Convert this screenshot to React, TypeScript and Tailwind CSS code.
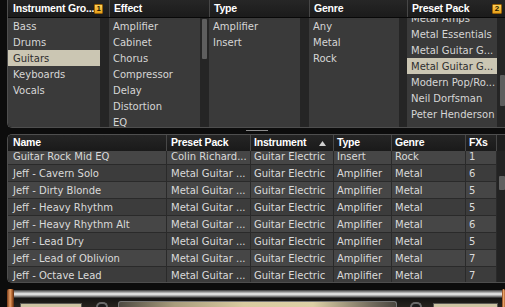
import React from "react";

type TopCol = {
  title: string;
  badge?: string;
  w: string;
  gutter: string;
  items: string[];
  selected?: number;
  offset: string;
  thumb?: string;
  first?: boolean;
};

const topCols: TopCol[] = [
  {
    title: "Instrument Gro...",
    badge: "1",
    w: "w-[101px]",
    gutter: "w-[9px]",
    items: ["Bass", "Drums", "Guitars", "Keyboards", "Vocals"],
    selected: 2,
    offset: "mt-0",
    first: true,
  },
  {
    title: "Effect",
    w: "w-[100px]",
    gutter: "w-[9px]",
    items: ["Amplifier", "Cabinet", "Chorus", "Compressor", "Delay", "Distortion", "EQ"],
    offset: "mt-0",
    thumb: "mt-[1px] ml-[2px] w-[5px] h-[40px]",
  },
  {
    title: "Type",
    w: "w-[100px]",
    gutter: "w-[9px]",
    items: ["Amplifier", "Insert"],
    offset: "mt-0",
  },
  {
    title: "Genre",
    w: "w-[98px]",
    gutter: "w-[8px]",
    items: ["Any", "Metal", "Rock"],
    offset: "mt-0",
  },
  {
    title: "Preset Pack",
    badge: "2",
    w: "w-[98px]",
    gutter: "w-[8px]",
    items: [
      "Metal Amps",
      "Metal Essentials",
      "Metal Guitar G...",
      "Metal Guitar G...",
      "Modern Pop/Ro...",
      "Neil Dorfsman",
      "Peter Henderson",
    ],
    selected: 3,
    offset: "mt-[-8px]",
    thumb: "mt-[57px] ml-[3px] w-[5px] h-[31px]",
  },
];

const tableCols = [
  { title: "Name", w: "w-[159px]", pl: "pl-[5px]" },
  { title: "Preset Pack", w: "w-[84px]", pl: "pl-[4px]" },
  { title: "Instrument", w: "w-[83px]", pl: "pl-[3px]", sort: true },
  { title: "Type", w: "w-[58px]", pl: "pl-[3px]" },
  { title: "Genre", w: "w-[74px]", pl: "pl-[3px]" },
  { title: "FXs", w: "w-[31px]", pl: "pl-[3px]" },
];

const rows: string[][] = [
  ["Guitar Rock Mid EQ", "Colin Richard...", "Guitar Electric", "Insert", "Rock", "1"],
  ["Jeff - Cavern Solo", "Metal Guitar ...", "Guitar Electric", "Amplifier", "Metal", "6"],
  ["Jeff - Dirty Blonde", "Metal Guitar ...", "Guitar Electric", "Amplifier", "Metal", "5"],
  ["Jeff - Heavy Rhythm", "Metal Guitar ...", "Guitar Electric", "Amplifier", "Metal", "5"],
  ["Jeff - Heavy Rhythm Alt", "Metal Guitar ...", "Guitar Electric", "Amplifier", "Metal", "6"],
  ["Jeff - Lead Dry", "Metal Guitar ...", "Guitar Electric", "Amplifier", "Metal", "5"],
  ["Jeff - Lead of Oblivion", "Metal Guitar ...", "Guitar Electric", "Amplifier", "Metal", "7"],
  ["Jeff - Octave Lead", "Metal Guitar ...", "Guitar Electric", "Amplifier", "Metal", "7"],
];

function Badge({ n }: { n: string }) {
  return (
    <div className="w-[10px] h-[10px] flex items-center justify-center rounded-[1px] border border-[#9a6208] bg-[linear-gradient(to_bottom,#ffd35a,#e7a11a)] text-[8px] leading-none font-bold text-[#2a1a00] font-['Liberation_Sans',Arial,sans-serif]">
      {n}
    </div>
  );
}

export default function App() {
  return (
    <div className="w-[505px] h-[307px] overflow-hidden bg-[#0c0c0c] text-[10px] font-['DejaVu_Sans',Verdana,sans-serif]">
      {/* Top filter browser */}
      <div className="ml-[7px] border-l border-b border-[#4e4e4e] rounded-bl-[5px] overflow-hidden">
        <div className="flex h-[18px] bg-[linear-gradient(to_bottom,#262626,#1b1b1b)] border-b border-[#080808]">
          {topCols.map((c, i) => (
            <div
              key={i}
              className={
                c.first
                  ? `${c.w} flex items-center justify-between pl-[5px] pr-[6px]`
                  : `${c.w} flex items-center justify-between pl-[4px] pr-[3px] border-l border-[#474747]`
              }
            >
              <span className="text-white font-bold text-[10.5px] tracking-[-0.2px] font-['Liberation_Sans',Arial,sans-serif] whitespace-nowrap">
                {c.title}
              </span>
              {c.badge && <Badge n={c.badge} />}
            </div>
          ))}
        </div>
        <div className="flex h-[109px]">
          {topCols.map((c, i) => (
            <div key={i} className={`${c.w} flex`}>
              <div className="flex-1 bg-[#3a3a3a] overflow-hidden">
                <div className={c.offset}>
                  {c.items.map((it, j) => (
                    <div
                      key={j}
                      className={
                        j === c.selected
                          ? `h-[16px] flex items-center whitespace-nowrap bg-[#cbc6b3] text-[#2e2e2e] ${c.first ? "pl-[5px]" : "pl-[4px]"}`
                          : `h-[16px] flex items-center whitespace-nowrap text-[#d6d6d6] ${c.first ? "pl-[5px]" : "pl-[4px]"}`
                      }
                    >
                      {it}
                    </div>
                  ))}
                </div>
              </div>
              <div className={`${c.gutter} bg-[#252525] flex flex-col`}>
                {c.thumb && <div className={`${c.thumb} bg-[#5e5e5e] rounded-[1px]`} />}
              </div>
            </div>
          ))}
        </div>
      </div>

      {/* Splitter grip */}
      <div className="h-[6px] flex items-center pl-[246px]">
        <div className="w-[22px] h-[1px] bg-[#8c8c8c] mt-[-1px]" />
      </div>

      {/* Results table */}
      <div className="ml-[7px] border-l border-t border-b border-[#4e4e4e] rounded-tl-[5px] rounded-bl-[5px] overflow-hidden">
        <div className="flex h-[16px] bg-[linear-gradient(to_bottom,#252525,#1a1a1a)]">
          {tableCols.map((c, i) => (
            <div
              key={i}
              className={`${c.w} ${c.pl} flex items-center justify-between pr-[4px] border-r border-[#474747]`}
            >
              <span className="text-white font-bold text-[10.5px] tracking-[-0.2px] font-['Liberation_Sans',Arial,sans-serif] whitespace-nowrap">
                {c.title}
              </span>
              {c.sort && (
                <svg width="7" height="5" viewBox="0 0 7 5" className="mr-[3px]">
                  <path d="M3.5 0 L7 5 L0 5 Z" fill="#d0d0d0" />
                </svg>
              )}
            </div>
          ))}
          <div className="flex-1 bg-[#1e1e1e]" />
        </div>
        <div className="flex h-[131px]">
          <div className="w-[489px] overflow-hidden">
            <div className="mt-[-3px]">
              {rows.map((r, ri) => (
                <div
                  key={ri}
                  className={
                    ri % 2 === 0
                      ? "flex h-[17px] border-b border-[#2a2a2a] bg-[#464646]"
                      : "flex h-[17px] border-b border-[#2a2a2a] bg-[#3c3c3c]"
                  }
                >
                  {r.map((cell, ci) => (
                    <div
                      key={ci}
                      className={`${tableCols[ci].w} ${tableCols[ci].pl} flex items-center border-r border-[#2a2a2a] text-[#dadada] whitespace-nowrap overflow-hidden`}
                    >
                      {cell}
                    </div>
                  ))}
                </div>
              ))}
            </div>
          </div>
          <div className="flex-1 bg-[#232323] flex flex-col">
            <div className="mt-[25px] ml-[2px] w-[6px] h-[14px] bg-[#606060] rounded-[1px]" />
          </div>
        </div>
      </div>

      <div className="h-[6px]" />

      {/* Bottom decorative rail */}
      <div className="flex h-[18px]">
        <div className="w-[7px]" />
        <div className="w-[7px] rounded-t-[2px] bg-[linear-gradient(to_right,#7a3a16,#e8a26a_45%,#b4652e_70%,#5a2a10)]" />
        <div className="flex-1 flex flex-col">
          <div className="mt-[1px] h-[8px] bg-[linear-gradient(to_bottom,#3a3a3a,#a8a8a8_30%,#f2f2f2_50%,#9a9a9a_75%,#1e1e1e)]" />
          <div className="flex-1 flex items-end bg-[linear-gradient(to_bottom,#141312,#26231e)]">
            <div className="ml-[6px] w-[62px] h-[4px] bg-[#cdc3a2] border-t border-l border-r border-[#5c5a55]" />
            <div className="ml-[14px] w-[12px] h-[5px] rounded-t-full border-t-2 border-l-2 border-r-2 border-[#6a6a6a] bg-[#1c1c1c]" />
            <div className="ml-[10px] w-[279px] h-[6px] rounded-t-[3px] border-t border-l border-r border-[#777] bg-[linear-gradient(to_right,#4e4a42,#a89c7c_20%,#d9cba0_45%,#ddd0a6_70%,#6e675a_92%,#4a463f)]" />
            <div className="ml-[13px] w-[12px] h-[5px] rounded-t-full border-t-2 border-l-2 border-r-2 border-[#6a6a6a] bg-[#1c1c1c]" />
            <div className="ml-[11px] w-[65px] h-[4px] bg-[#cdc3a2] border-t border-l border-r border-[#5c5a55]" />
          </div>
        </div>
        <div className="w-[3px] rounded-t-[2px] bg-[linear-gradient(to_right,#7a3a16,#e8a26a,#b4652e)]" />
      </div>
    </div>
  );
}
